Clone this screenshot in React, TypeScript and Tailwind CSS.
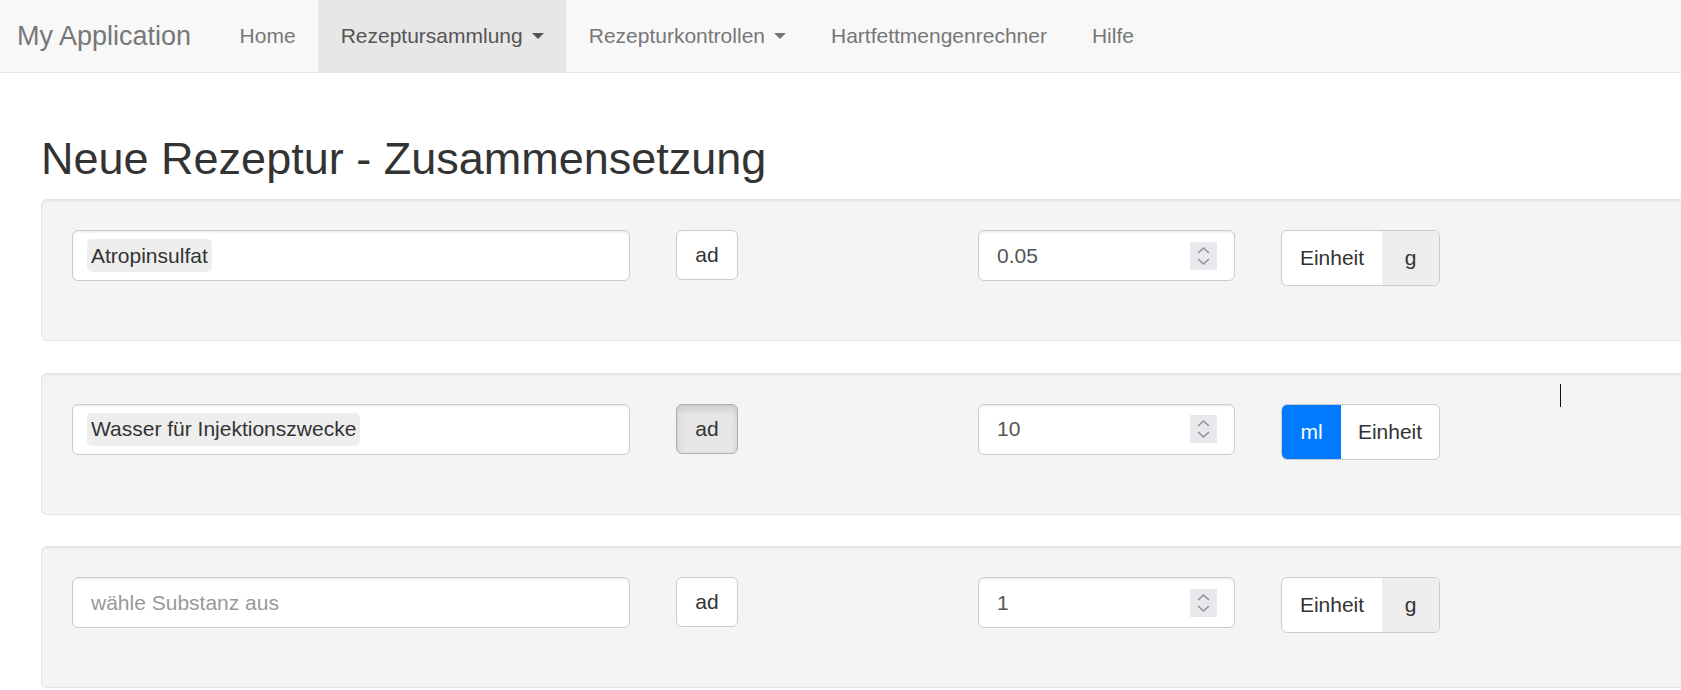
import React from "react";

type Row = {
  tag?: string;
  placeholder?: string;
  pressed?: boolean;
  amount: string;
  unit: string;
  unitFirst?: boolean;
};

const rows: Row[] = [
  { tag: "Atropinsulfat", amount: "0.05", unit: "g" },
  { tag: "Wasser für Injektionszwecke", pressed: true, amount: "10", unit: "ml", unitFirst: true },
  { placeholder: "wähle Substanz aus", amount: "1", unit: "g" },
];

function Caret() {
  return (
    <span className="ml-[9px] inline-block h-0 w-0 border-x-[6px] border-t-[6px] border-x-transparent border-t-current" />
  );
}

function NavItem({ label, active, dropdown }: { label: string; active?: boolean; dropdown?: boolean }) {
  return (
    <a
      href="#"
      className={`flex h-full items-center px-[22.5px] ${
        active ? "bg-[#e7e7e7] text-[#555]" : "text-[#777]"
      }`}
    >
      {label}
      {dropdown && <Caret />}
    </a>
  );
}

function Spinner() {
  return (
    <div className="mr-[17px] h-[28px] w-[27px] bg-[#e9e9ed]">
      <svg width="27" height="28" viewBox="0 0 27 28" fill="none" stroke="#8d8d95" strokeWidth="1.5">
        <polyline points="8,11 13.5,6 19,11" />
        <polyline points="8,17 13.5,22 19,17" />
      </svg>
    </div>
  );
}

function UnitGroup({ unit, unitFirst }: { unit: string; unitFirst?: boolean }) {
  if (unitFirst) {
    return (
      <div className="ml-[46px] flex h-[56px] overflow-hidden rounded-[6px] border border-[#ccc] bg-white">
        <div className="flex w-[59px] items-center justify-center bg-[#007bff] text-white">{unit}</div>
        <div className="flex w-[98px] items-center justify-center">Einheit</div>
      </div>
    );
  }
  return (
    <div className="ml-[46px] flex h-[56px] overflow-hidden rounded-[6px] border border-[#ccc] bg-white">
      <div className="flex w-[100px] items-center justify-center">Einheit</div>
      <div className="flex w-[57px] items-center justify-center bg-[#eee]">{unit}</div>
    </div>
  );
}

function Panel({ row }: { row: Row }) {
  return (
    <div className="flex h-[142px] w-[1700px] shrink-0 items-start rounded-[6px] border border-[#e3e3e3] bg-[#f4f4f4] pl-[30px] pt-[30px] shadow-[inset_0_1.5px_1.5px_rgba(0,0,0,0.05)]">
      <div
        className={`flex h-[51px] w-[558px] items-center rounded-[6px] border border-[#ccc] bg-white shadow-[inset_0_1.5px_1.5px_rgba(0,0,0,0.075)] ${
          row.tag ? "pl-[14px]" : "pl-[18px]"
        }`}
      >
        {row.tag ? (
          <span className="flex h-[33px] items-center rounded-[5px] bg-[#eee] px-[4px] text-[#333]">{row.tag}</span>
        ) : (
          <span className="text-[#999]">{row.placeholder}</span>
        )}
      </div>

      <button
        className={`ml-[46px] flex h-[50px] w-[62px] items-center justify-center rounded-[6px] border ${
          row.pressed
            ? "border-[#adadad] bg-[#e6e6e6] shadow-[inset_0_4px_7px_rgba(0,0,0,0.125)]"
            : "border-[#ccc] bg-white"
        }`}
      >
        ad
      </button>

      <div className="ml-[240px] flex h-[51px] w-[257px] items-center justify-between rounded-[6px] border border-[#ccc] bg-white pl-[18px] text-[#555] shadow-[inset_0_1.5px_1.5px_rgba(0,0,0,0.075)]">
        <span>{row.amount}</span>
        <Spinner />
      </div>

      <UnitGroup unit={row.unit} unitFirst={row.unitFirst} />
    </div>
  );
}

export default function App() {
  return (
    <div className="relative min-h-screen w-full overflow-hidden bg-white font-['Liberation_Sans',Arial,sans-serif] text-[21px] text-[#333]">
      <nav className="flex h-[73px] items-stretch border-b border-[#e7e7e7] bg-[#f8f8f8] pl-[17px]">
        <a href="#" className="mr-[26px] flex items-center text-[27px] text-[#777]">
          My Application
        </a>
        <NavItem label="Home" />
        <NavItem label="Rezeptursammlung" active dropdown />
        <NavItem label="Rezepturkontrollen" dropdown />
        <NavItem label="Hartfettmengenrechner" />
        <NavItem label="Hilfe" />
      </nav>

      <main className="pl-[41px] pt-[61px]">
        <h2 className="mb-[15.5px] text-[45px] leading-[49.5px] font-medium text-[#333]">
          Neue Rezeptur - Zusammensetzung
        </h2>
        <div className="flex flex-col gap-[31.5px]">
          {rows.map((row, i) => (
            <Panel key={i} row={row} />
          ))}
        </div>
      </main>

      {/* mouse text cursor */}
      <div className="absolute left-[1560px] top-[384px] h-[23px] w-px bg-[#111]" />
    </div>
  );
}
